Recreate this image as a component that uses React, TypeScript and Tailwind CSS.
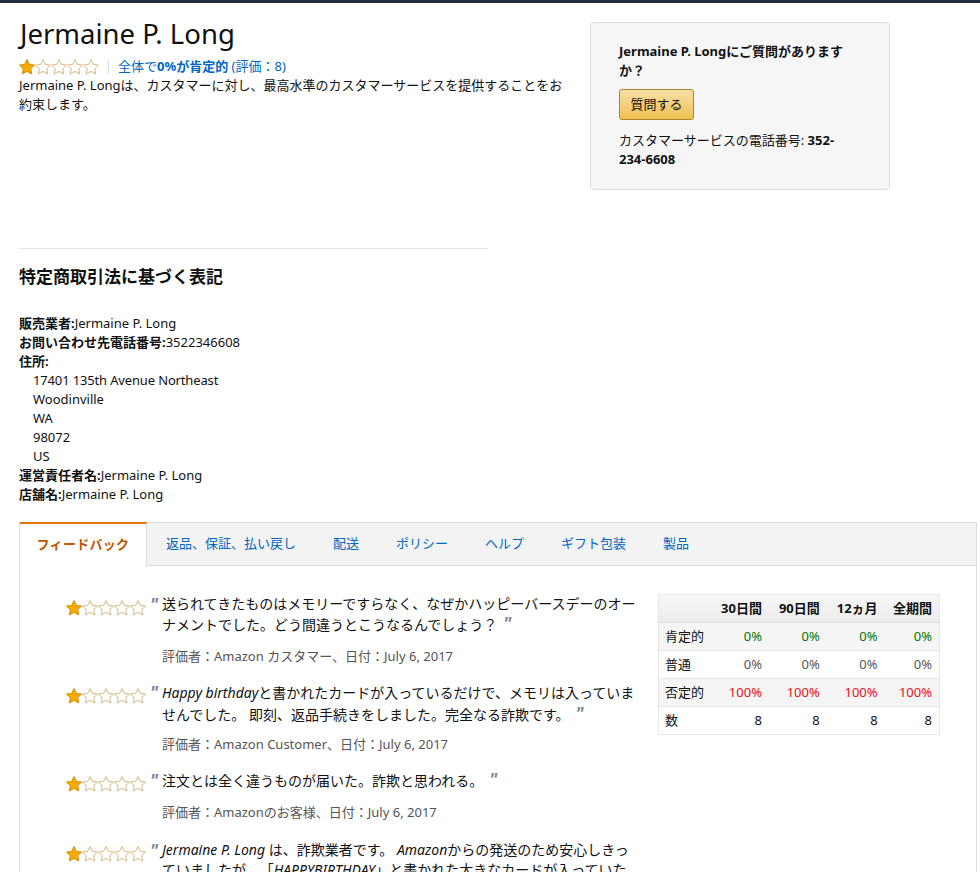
const FONT = 'font-["Noto_Sans","Noto_Sans_CJK_JP",sans-serif]';

const starPath = 'M8 .6l2.3 4.8 5.2.7-3.8 3.6 1 5.2L8 12.4l-4.7 2.5 1-5.2L.5 6.1l5.2-.7z';

const Stars = () => (
  <span className="flex shrink-0 items-center">
    {[0, 1, 2, 3, 4].map((i) => (
      <svg key={i} viewBox="0 0 16 16" className="h-4 w-4">
        <path
          d={starPath}
          fill={i === 0 ? '#f5ab00' : '#fff'}
          stroke={i === 0 ? '#d98a00' : '#d8b67f'}
          strokeWidth="1"
          strokeLinejoin="round"
        />
      </svg>
    ))}
  </span>
);

const tabs = ['返品、保証、払い戻し', '配送', 'ポリシー', 'ヘルプ', 'ギフト包装', '製品'];

type ReviewProps = {
  children: React.ReactNode;
  by?: string;
  className: string;
  textClass: string;
  metaClass?: string;
};

const Review = ({ children, by, className, textClass, metaClass }: ReviewProps) => (
  <div className={`flex ${className}`}>
    <div className="mt-[6px] w-[80px] shrink-0">
      <Stars />
    </div>
    <div className="ml-[4px] w-[12px] shrink-0 text-[18px] leading-[20px] font-bold text-[#808890] italic">"</div>
    <div className="w-[478px]">
      <p className={`text-[14px] text-[#111] ${textClass}`}>{children}</p>
      {by && <p className={`text-[13px] leading-[19px] text-[#555] ${metaClass}`}>{by}</p>}
    </div>
  </div>
);

const EndQuote = () => (
  <span className="ml-[6px] text-[18px] leading-none font-bold text-[#808890] italic">"</span>
);

const rows = [
  { label: '肯定的', value: '0%', color: 'text-[#007600]', bg: 'bg-[#f5f5f5]' },
  { label: '普通', value: '0%', color: 'text-[#555]', bg: 'bg-white' },
  { label: '否定的', value: '100%', color: 'text-[#e8101a]', bg: 'bg-[#f5f5f5]' },
  { label: '数', value: '8', color: 'text-[#111]', bg: 'bg-white' },
];

const cols = ['30日間', '90日間', '12ヵ月', '全期間'];

const colClass = ['w-[58px]', 'w-[58px]', 'w-[58px]', 'w-[55px]'];

export default function App() {
  return (
    <div className={`h-[872px] overflow-hidden bg-white text-[#111] [text-spacing-trim:space-all] ${FONT}`}>
      <div className="h-[3px] bg-[#232f3e]" />

      <div className="flex pl-[19px]">
        <div className="w-[545px]">
          <h1 className="mt-[12px] ml-px text-[27.5px] leading-[38px] font-normal">Jermaine P. Long</h1>
          <div className="mt-[4px] flex h-[19px] items-center">
            <Stars />
            <span className="mx-[9px] h-[14px] w-px bg-[#ddd]" />
            <span className="text-[13px] text-[#0066c0]">
              全体で<b>0%が肯定的</b> (評価：8)
            </span>
          </div>
          <p className="text-[13px] leading-[19px]">
            Jermaine P. Longは、カスタマーに対し、最高水準のカスタマーサービスを提供することをお約束します。
          </p>
        </div>
        <div className="mt-[19px] ml-[26px] h-[168px] w-[300px] rounded-[4px] border border-[#ddd] bg-[#f6f6f6] pt-[19px] pr-[40px] pl-[28px]">
          <p className="text-[13px] leading-[19px] font-bold">Jermaine P. Longにご質問がありますか？</p>
          <button className="mt-[9px] flex h-[31px] w-[75px] items-center justify-center rounded-[3px] border border-[#a88734] bg-gradient-to-b from-[#f7dfa5] to-[#f0c14b] text-[13px]">
            質問する
          </button>
          <p className="mt-[11px] text-[13px] leading-[19px]">
            カスタマーサービスの電話番号: <b>352-234-6608</b>
          </p>
        </div>
      </div>

      <div className="mt-[58px] ml-[19px] h-px w-[469px] bg-[#e7e7e7]" />

      <h2 className="mt-[16px] ml-[19px] text-[17px] leading-[24px] font-bold">特定商取引法に基づく表記</h2>

      <div className="mt-[25px] ml-[19px] text-[13px] leading-[19px]">
        <p><b>販売業者:</b>Jermaine P. Long</p>
        <p><b>お問い合わせ先電話番号:</b>3522346608</p>
        <p><b>住所:</b></p>
        <div className="pl-[14px]">
          <p className="tracking-[-0.15px]">17401 135th Avenue Northeast</p>
          <p>Woodinville</p>
          <p>WA</p>
          <p>98072</p>
          <p>US</p>
        </div>
        <p><b>運営責任者名:</b>Jermaine P. Long</p>
        <p><b>店舗名:</b>Jermaine P. Long</p>
      </div>

      <div className="mt-[18px] ml-[19px] w-[958px] border-x border-[#ddd]">
        <div className="flex h-[44px] border-t border-[#ddd] bg-[#f3f3f3]">
          <div className="-mt-px flex h-[44px] w-[127px] items-center justify-center border-t-2 border-r border-t-[#e77600] border-r-[#ddd] bg-white text-[13px] font-bold tracking-[0.3px] text-[#c45500]">
            フィードバック
          </div>
          <div className="flex grow gap-[37px] border-b border-[#ddd] pl-[19px]">
            {tabs.map((t) => (
              <div key={t} className="flex items-center text-[13px] text-[#0066c0]">
                {t}
              </div>
            ))}
          </div>
        </div>

        <div className="flex pt-[28px] pl-[46px]">
          <div className="w-[592px] shrink-0">
            <Review
              by="評価者：Amazon カスタマー、日付：July 6, 2017"
              className=""
              textClass="leading-[20px]"
              metaClass="mt-[12px]"
            >
              送られてきたものはメモリーですらなく、なぜかハッピーバースデーのオーナメントでした。どう間違うとこうなるんでしょう？<EndQuote />
            </Review>
            <Review
              by="評価者：Amazon Customer、日付：July 6, 2017"
              className="mt-[16px]"
              textClass="leading-[22px]"
              metaClass="mt-[9px]"
            >
              <i>Happy birthday</i>と書かれたカードが入っているだけで、メモリは入っていませんでした。 即刻、返品手続きをしました。完全なる詐欺です。<EndQuote />
            </Review>
            <Review
              by="評価者：Amazonのお客様、日付：July 6, 2017"
              className="mt-[16px]"
              textClass="leading-[22px]"
              metaClass="mt-[11px]"
            >
              注文とは全く違うものが届いた。詐欺と思われる。<EndQuote />
            </Review>
            <Review className="mt-[18px]" textClass="leading-[20px]">
              <i>Jermaine P. Long</i> は、詐欺業者です。 <i>Amazon</i>からの発送のため安心しきっていましたが、「<i>HAPPYBIRTHDAY</i>」と書かれた大きなカードが入っていただけでした。
            </Review>
          </div>

          <table className="h-[141px] w-[282px] shrink-0 border-collapse border border-[#e7e7e7] text-[13px]">
            <thead>
              <tr className="h-[28px] border-b border-[#ddd] bg-gradient-to-b from-[#f7f7f7] to-[#ececec]">
                <th className="w-[53px]" />
                {cols.map((c, i) => (
                  <th key={c} className={`pr-[7px] text-right font-bold ${colClass[i]}`}>{c}</th>
                ))}
              </tr>
            </thead>
            <tbody>
              {rows.map((r) => (
                <tr key={r.label} className={`h-[28px] border-b border-[#e7e7e7] ${r.bg}`}>
                  <td className="pl-[6px]">{r.label}</td>
                  {cols.map((c) => (
                    <td key={c} className={`pr-[7px] text-right ${r.color}`}>{r.value}</td>
                  ))}
                </tr>
              ))}
            </tbody>
          </table>
        </div>
      </div>
    </div>
  );
}
